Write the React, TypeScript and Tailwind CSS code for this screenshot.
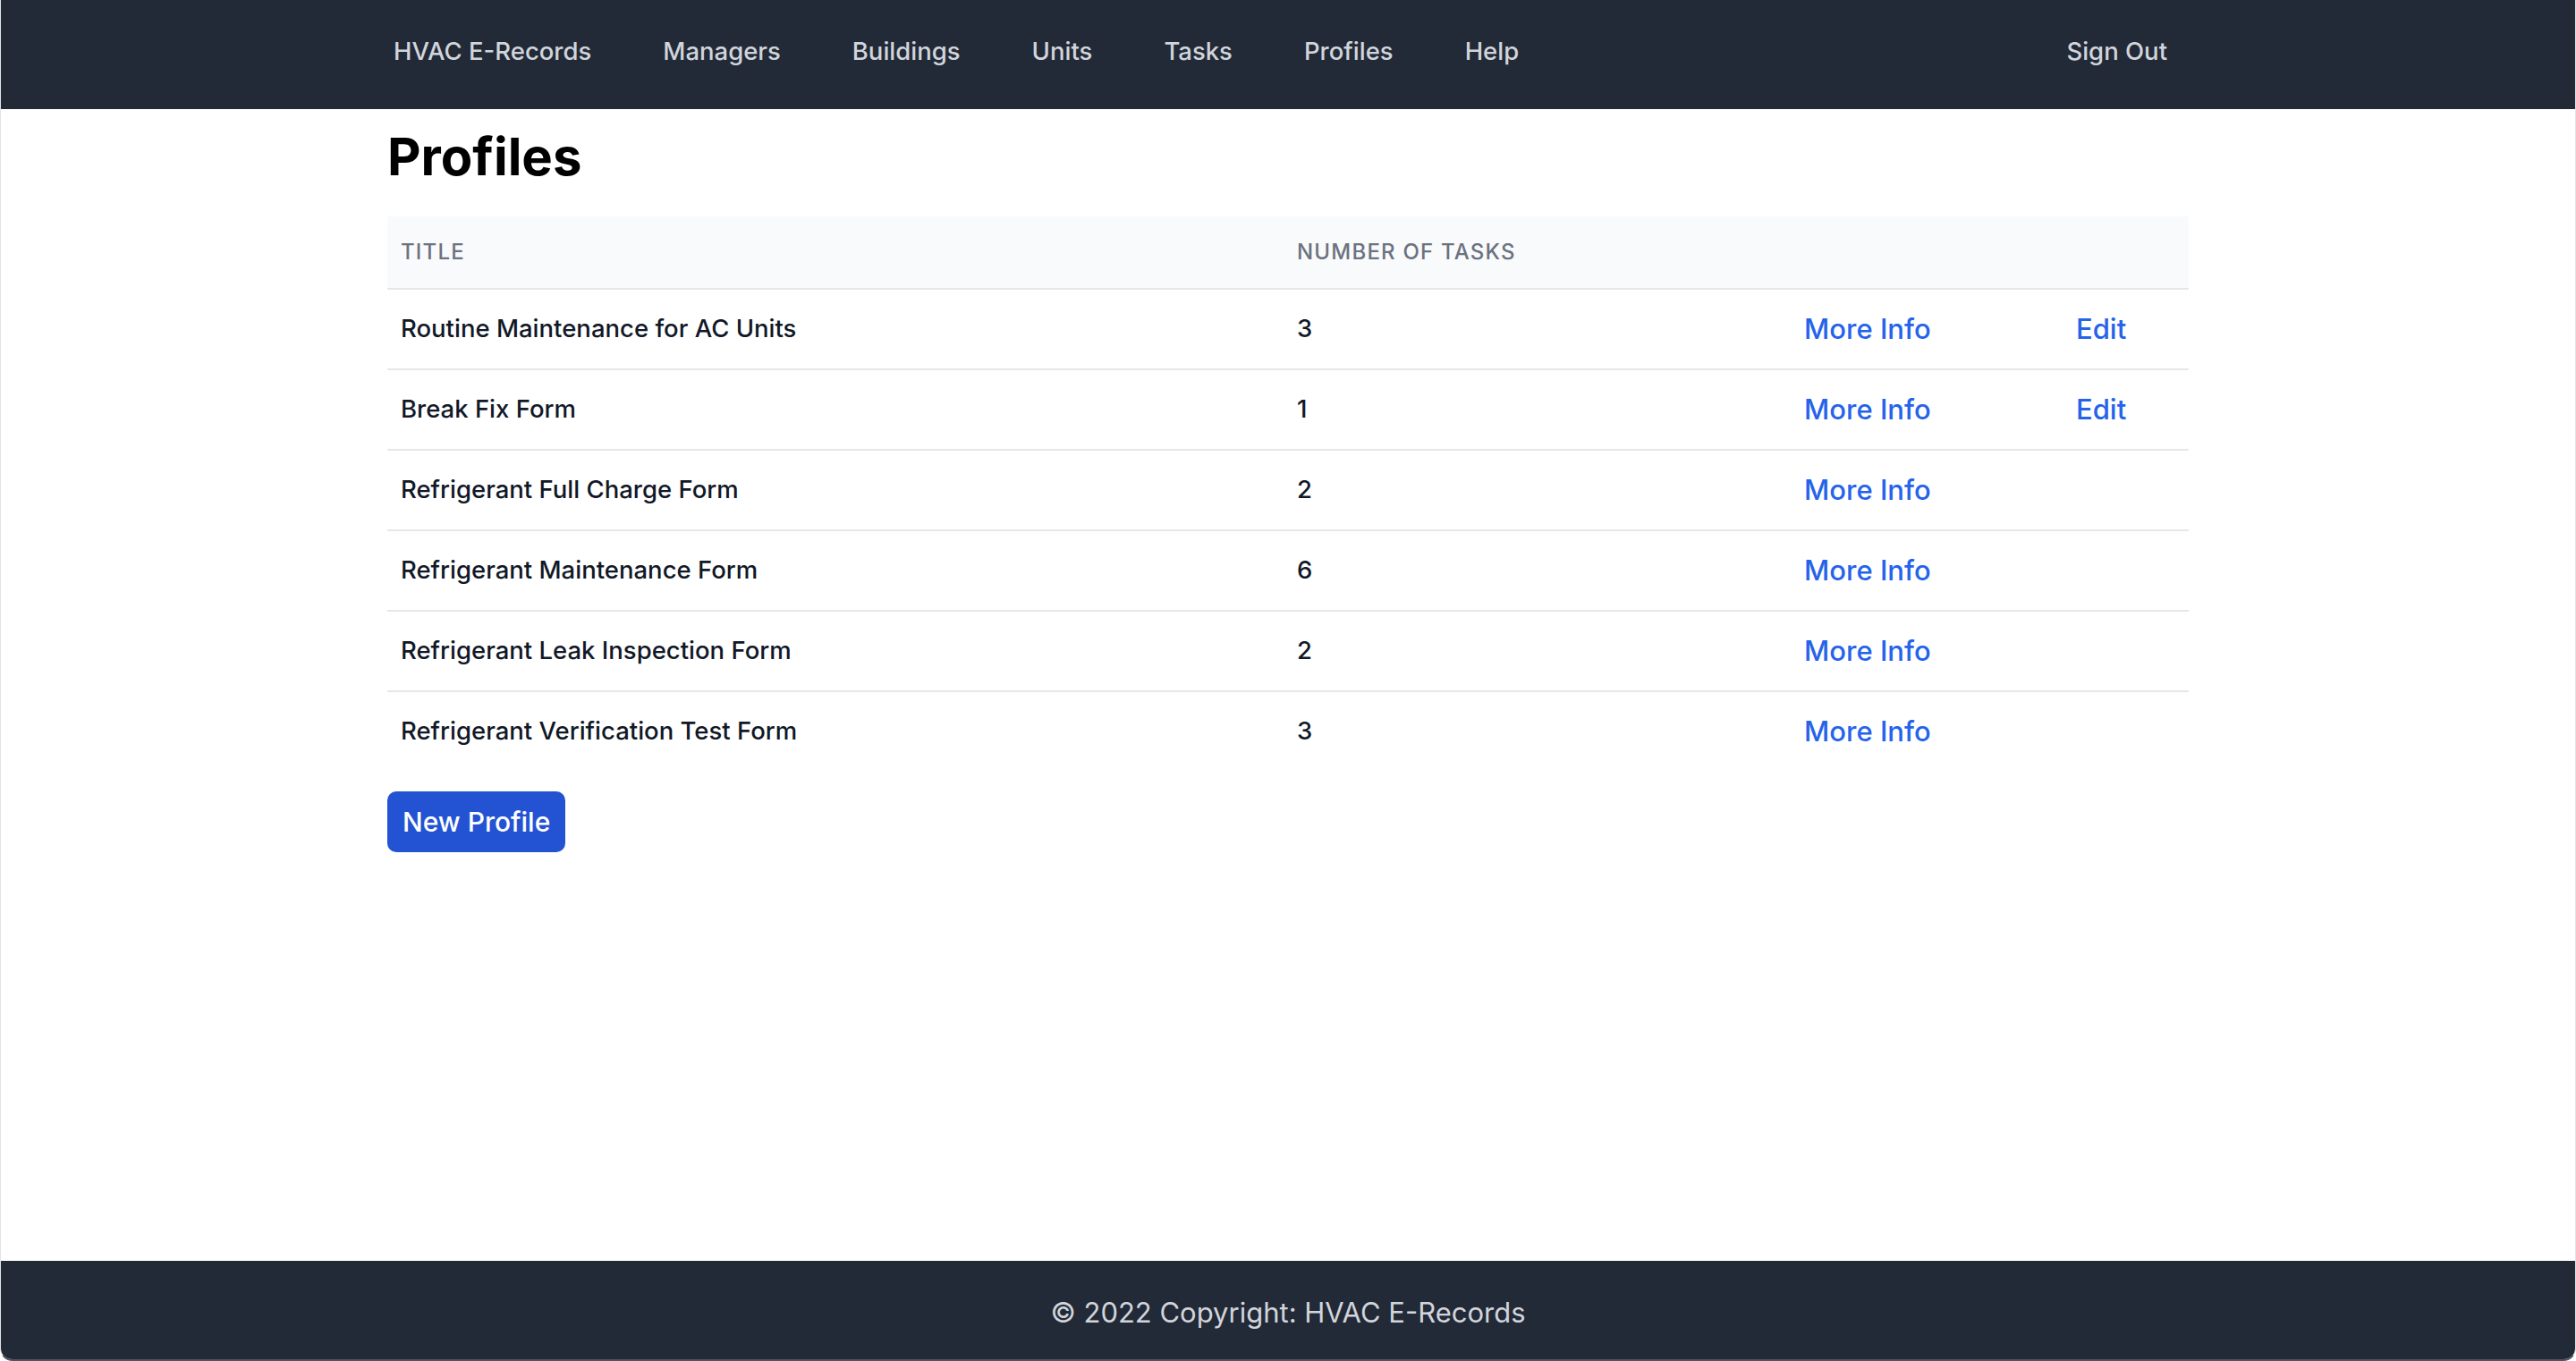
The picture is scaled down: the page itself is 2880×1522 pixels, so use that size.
import React from "react";

const rows = [
  { title: "Routine Maintenance for AC Units", count: 3, edit: true },
  { title: "Break Fix Form", count: 1, edit: true },
  { title: "Refrigerant Full Charge Form", count: 2, edit: false },
  { title: "Refrigerant Maintenance Form", count: 6, edit: false },
  { title: "Refrigerant Leak Inspection Form", count: 2, edit: false },
  { title: "Refrigerant Verification Test Form", count: 3, edit: false },
];

const navItems = ["HVAC E-Records", "Managers", "Buildings", "Units", "Tasks", "Profiles", "Help"];

export default function App() {
  return (
    <div
      className="flex h-[1522px] w-full flex-col overflow-hidden rounded-b-[14px] border-x border-b-2 border-x-[#8a8e9640] border-b-[#4f545e] bg-white"
      style={{ fontFamily: "Inter, 'Noto Sans', sans-serif" }}
    >
      <nav className="h-[122px] shrink-0 bg-[#222937]">
        <div className="mx-auto flex h-full w-[2014px] items-center justify-between pb-[8px] pl-[7px] pr-[24px]">
          <div className="flex items-center gap-[80px]">
            {navItems.map((n) => (
              <a key={n} className="text-[27.5px] font-medium leading-[40px] text-[#d1d5db]">
                {n}
              </a>
            ))}
          </div>
          <a className="text-[27.5px] font-medium leading-[40px] text-[#d1d5db]">Sign Out</a>
        </div>
      </nav>

      <main className="flex-1">
        <div className="mx-auto w-[2014px]">
          <h1 className="mt-[17px] text-[58px] font-bold leading-[72px] text-black">Profiles</h1>

          <div className="mt-[31px]">
            <div className="grid h-[82px] grid-cols-[1001px_567px_304px_142px] items-center border-b-2 border-[#e5e7eb] bg-[#f9fafb]">
              <div className="pl-[15px] text-[24px] font-medium uppercase tracking-wider text-[#6b7280]">Title</div>
              <div className="pl-[16px] text-[24px] font-medium uppercase tracking-wider text-[#6b7280]">Number of Tasks</div>
              <div />
              <div />
            </div>
            {rows.map((r, i) => (
              <div
                key={r.title}
                className={
                  i < rows.length - 1
                    ? "grid h-[90px] grid-cols-[1001px_567px_304px_142px] items-center border-b-2 border-[#e5e7eb]"
                    : "grid h-[88px] grid-cols-[1001px_567px_304px_142px] items-center"
                }
              >
                <div className="pl-[15px] text-[27.5px] font-medium text-[#111827]">{r.title}</div>
                <div className="pl-[16px] text-[27.5px] font-medium text-[#111827]">{r.count}</div>
                <div className="pl-[16px] text-[31px] font-medium text-[#2563eb]">
                  <a>More Info</a>
                </div>
                <div className="pl-[16px] text-[31px] font-medium text-[#2563eb]">
                  {r.edit ? <a>Edit</a> : null}
                </div>
              </div>
            ))}
          </div>

          <button className="mt-[23px] flex h-[68px] items-center rounded-[10px] bg-[#2353d3] px-[17px] text-[30px] font-medium text-white">
            New Profile
          </button>
        </div>
      </main>

      <footer className="flex h-[110px] shrink-0 items-center justify-center bg-[#222937] pt-[6px]">
        <p className="text-[31px] text-[#d1d5db]">© 2022 Copyright: HVAC E-Records</p>
      </footer>
    </div>
  );
}
